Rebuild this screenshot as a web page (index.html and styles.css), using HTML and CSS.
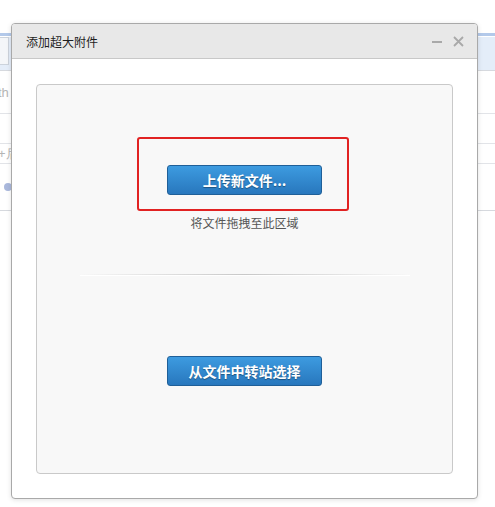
FILE: index.html
```html
<!DOCTYPE html>
<html lang="zh">
<head>
<meta charset="utf-8">
<title>添加超大附件</title>
<link rel="stylesheet" href="styles.css">
</head>
<body>
<div class="page">
  <div class="gap"></div>
  <div class="bluebar"></div>
  <div class="toolbar"><div class="tb-box"></div></div>
  <div class="row row1"><span class="ghost">th</span></div>
  <div class="row row2"></div>
  <div class="row row3"><span class="ghost">+后</span></div>
  <div class="row row4"><span class="ghost-icon"></span></div>
</div>

<div class="dialog">
  <div class="dlg-head">
    <span class="dlg-title">添加超大附件</span>
    <span class="dlg-tools">
      <span class="tool-min"></span>
      <svg class="tool-close" width="11" height="11" viewBox="0 0 11 11"><path d="M1 1L10 10M10 1L1 10" stroke="#a9a9a9" stroke-width="1.8" fill="none"/></svg>
    </span>
  </div>
  <div class="dlg-body">
    <div class="drop">
      <div class="upload-zone">
        <span class="highlight"></span>
        <button class="btn">上传新文件...</button>
        <div class="hint">将文件拖拽至此区域</div>
      </div>
      <div class="sep"></div>
      <button class="btn btn2">从文件中转站选择</button>
    </div>
  </div>
</div>
</body>
</html>
```
FILE: styles.css
```css
html, body { margin: 0; padding: 0; }
body {
  width: 495px;
  height: 507px;
  background: #fff;
  font-family: "Noto Sans CJK SC", "Microsoft YaHei", sans-serif;
  position: relative;
  overflow: hidden;
}
.page { width: 100%; }
.gap { height: 33px; }
.bluebar { height: 3px; background: #b3c9ea; }
.toolbar {
  height: 33px;
  background: #e4edf9;
  border-bottom: 1px solid #d6d9de;
}
.tb-box {
  width: 8px;
  height: 26px;
  border: 1px solid #ccd3dc;
  border-left: none;
  background: #f4f6f9;
  margin-top: 1px;
}
.row { border-bottom: 1px solid #e2e4e8; display: flex; align-items: center; }
.row1 { height: 42px; }
.row2 { height: 29px; }
.row3 { height: 19px; }
.row4 { height: 46px; border-bottom-color: #d6d9de; }
.ghost { color: #b5b5b5; font-size: 13px; font-family: "Liberation Sans", sans-serif; margin-left: -2px; }
.ghost-icon { width: 8px; height: 8px; border-radius: 50%; background: #aab8dc; margin-left: 4px; }

.dialog {
  position: absolute;
  left: 11px;
  top: 23px;
  width: 467px;
  height: 476px;
  box-sizing: border-box;
  border: 1px solid #a9a9a9;
  border-radius: 4px;
  background: #fff;
  box-shadow: 0 1px 5px rgba(0,0,0,0.12);
  display: flex;
  flex-direction: column;
  overflow: hidden;
}
.dlg-head {
  height: 34px;
  flex: none;
  background: #e8e8e8;
  border-bottom: 1px solid #c8c8c8;
  display: flex;
  align-items: center;
  justify-content: space-between;
  padding: 0 13px 0 14px;
}
.dlg-title { font-size: 12px; color: #1e1e1e; }
.dlg-tools { display: flex; align-items: center; gap: 11px; }
.tool-min { width: 10px; height: 2px; background: #a9a9a9; margin-top: 1px; }
.tool-close { display: block; }

.dlg-body { flex: 1; padding: 25px 24px 24px 24px; display: flex; }
.drop {
  flex: 1;
  background: #f8f8f8;
  border: 1px solid #c9c9c9;
  border-radius: 4px;
  display: flex;
  flex-direction: column;
  align-items: center;
  padding-top: 80px;
}
.upload-zone {
  position: relative;
  display: flex;
  flex-direction: column;
  align-items: center;
}
.highlight {
  position: absolute;
  left: -30px;
  top: -28px;
  width: 212px;
  height: 74px;
  box-sizing: border-box;
  border: 2px solid #e12222;
  border-radius: 3px;
}
.btn {
  width: 155px;
  height: 30px;
  box-sizing: border-box;
  border: 1px solid #1f5f98;
  border-radius: 3px;
  background: linear-gradient(#3d9be0, #2877bd);
  color: #fff;
  font-family: "Noto Sans CJK SC", sans-serif;
  font-size: 14px;
  font-weight: bold;
  text-shadow: 0 1px 1px rgba(0,0,0,0.35);
  padding: 0;
  line-height: 26px;
}
.hint {
  margin-top: 19px;
  font-size: 12px;
  line-height: 18px;
  color: #555;
}
.sep {
  width: 330px;
  height: 1px;
  margin-top: 42px;
  background: linear-gradient(90deg, rgba(200,200,200,0), #c8c8c8 50%, rgba(200,200,200,0));
  box-shadow: 0 1px 0 #fff;
}
.btn2 { margin-top: 81px; }
```
